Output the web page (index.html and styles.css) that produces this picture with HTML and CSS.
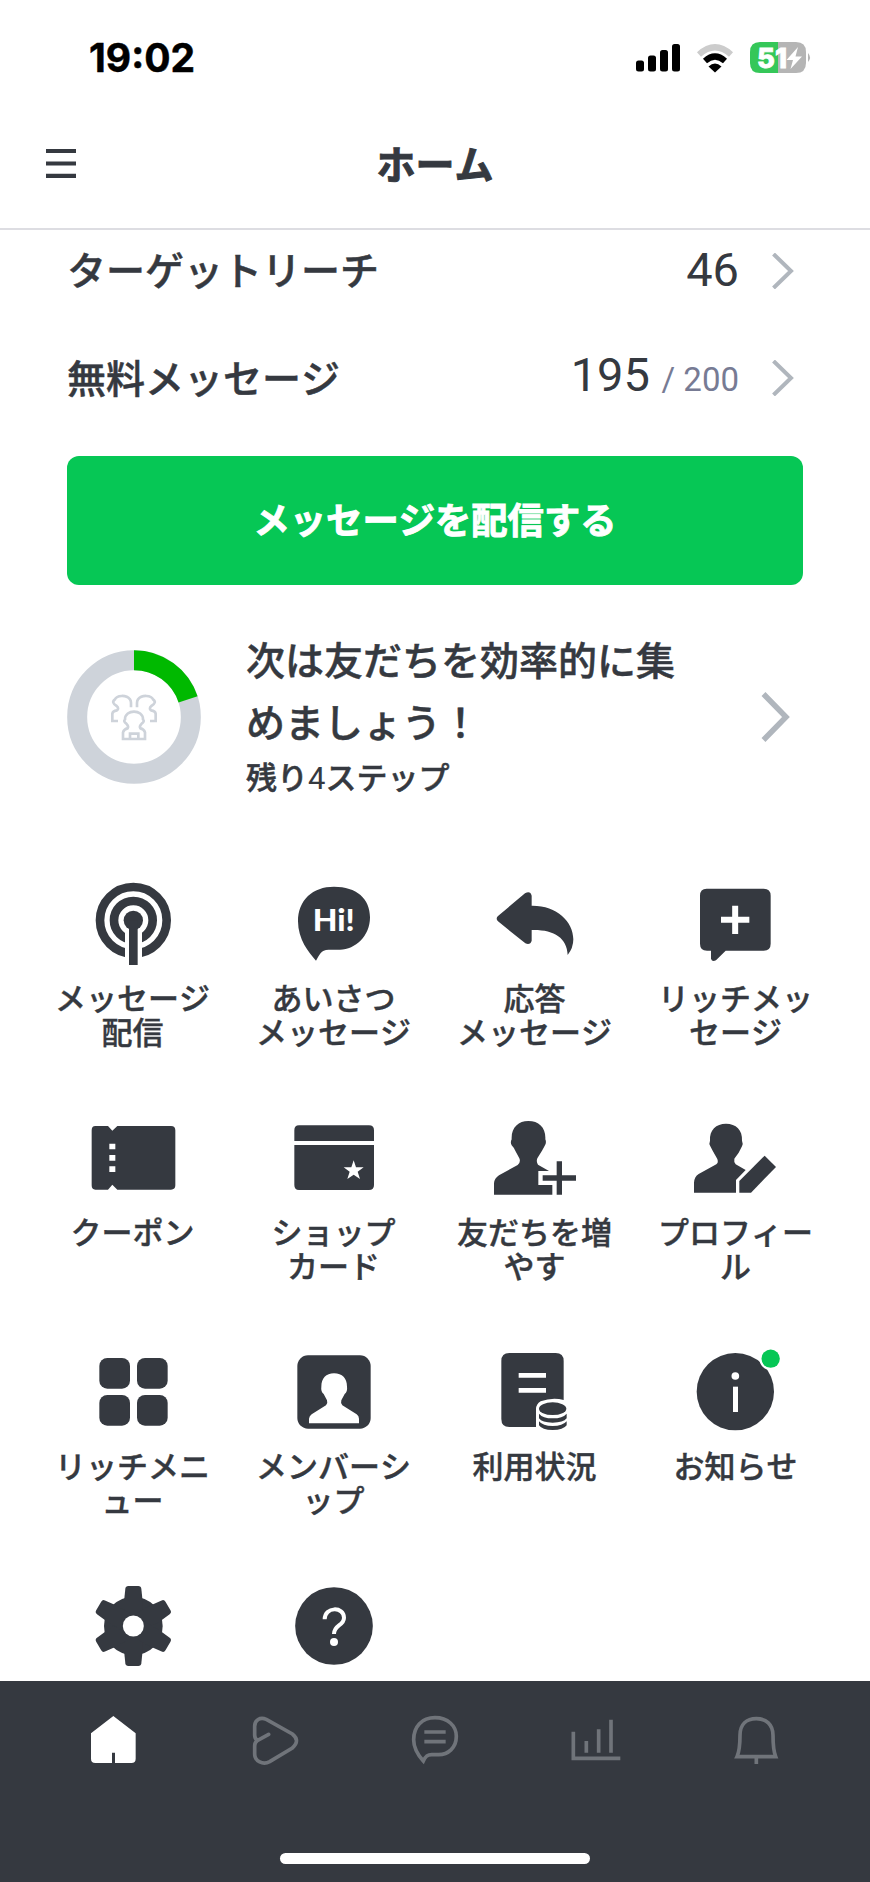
FILE: index.html
```html
<!DOCTYPE html>
<html lang="ja">
<head>
<meta charset="utf-8">
<title>ホーム</title>
<link rel="stylesheet" href="styles.css">
</head>
<body>
<div class="app">
  <div class="status">
    <span class="time">19:02</span>
    <svg class="status-icons" viewBox="630 36 190 44">
      <g fill="#000"><rect x="636" y="60.5" width="8" height="11" rx="2.5"/><rect x="648" y="55.5" width="8" height="16" rx="2.5"/><rect x="660" y="50" width="8" height="21.5" rx="2.5"/><rect x="672" y="44" width="8" height="27.500" rx="2.500"/></g>
      <path d="M699 54.500Q715 40 731 54.500" fill="none" stroke="#ccc" stroke-width="6"/>
      <path d="M705 61Q715 52 725 61" fill="none" stroke="#000" stroke-width="6"/>
      <path d="M708.500 66.500Q715 60.500 721.500 66.500L715 72.500Z" fill="#000"/>
      <path d="M778 42H760Q750 42 750 52V63Q750 73 760 73H778Z" fill="#35c759"/>
      <path d="M778 42H796Q806 42 806 52V63Q806 73 796 73H778Z" fill="#b5b5b5"/>
      <path d="M808 53Q812 57.500 808 62Z" fill="#b5b5b5"/>
      <text x="757" y="67.700" class="battery-text" textLength="30" lengthAdjust="spacingAndGlyphs">51</text>
      <path d="M798 47L786.500 60H793L790.500 69L802 56.500H795.500Z" fill="#fff"/>
    </svg>
  </div>
  <header class="header">
    <svg class="menu" viewBox="0 0 32 32"><path d="M0 3H30M0 15.500H30M0 27.800H30" stroke="#353940" stroke-width="4.200"/></svg>
    <h1>ホーム</h1>
  </header>
  <main class="main">
    <div class="row"><span class="row-label">ターゲットリーチ</span><span class="num">46</span><svg class="chev" viewBox="0 0 24 36"><path d="M2.500 1L20 18L2.500 35" /></svg></div>
    <div class="row"><span class="row-label">無料メッセージ</span><span class="num">195 <small>/ 200</small></span><svg class="chev" viewBox="0 0 24 36"><path d="M2.500 1L20 18L2.500 35" /></svg></div>
    <button class="send">メッセージを配信する</button>
    <section class="step">
      <svg class="ring" viewBox="21 27 402 402">
        <circle cx="222" cy="228" r="170.500" class="ring-track"/>
        <path d="M222 57.500A170.500 170.500 0 0 1 384.200 175.300" class="ring-value"/>
        <g class="people">
          <path id="friend" d="M174 240H157V218Q158 210 171 208Q178 202 170 195Q152 184 165 175C170 163 198 160 210 175Q213 179 213 186V199"/>
          <use href="#friend" transform="matrix(-1 0 0 1 444 0)"/>
          <path class="people-front" d="M189 294V274Q192 264 203 262Q207 256 199 248Q189 241 195 235C195 204 249 204 249 235Q255 241 245 248Q237 256 241 262Q252 264 255 274V294Z"/>
          <path d="M210 292V278H235V292"/>
        </g>
      </svg>
      <div class="step-text"><h2>次は友だちを効率的に集めましょう！</h2><p>残り<span class="four">4</span>ステップ</p></div>
      <svg class="chev-big" viewBox="0 0 32 50"><path d="M3.500 2L26 25L3.500 48"/></svg>
    </section>
    <nav class="grid">
      <a class="cell">
        <svg viewBox="129 30 300 300"><g fill="none" stroke="#353940"><circle cx="280" cy="181" r="100" stroke-width="26"/><circle cx="280" cy="181" r="58" stroke-width="26"/></g><path d="M255 200H306V320H255Z" fill="#fff"/><circle cx="280" cy="181" r="29"/><path d="M267 181H293V315H267Z"/></svg>
        <span>メッセージ<br>配信</span>
      </a>
      <a class="cell">
        <svg viewBox="732 30 300 300"><path d="M882 80C950 80 990 116 990 172C990 228 946 269 900 269H866C842 269 838 286 828 302C806 278 774 238 774 184C774 120 818 80 882 80Z"/><text x="818" y="214" class="hi" textLength="126" lengthAdjust="spacingAndGlyphs">Hi!</text></svg>
        <span>あいさつ<br>メッセージ</span>
      </a>
      <a class="cell">
        <svg viewBox="135 30 300 300"><path d="M174 168L255 100Q271 91 275 107V137C350 136 400 185 400 238Q400 264 383 285C381 232 340 208 275 210V242Q271 256 256 250L174 184Q166 176 174 168Z"/></svg>
        <span>応答<br>メッセージ</span>
      </a>
      <a class="cell">
        <svg viewBox="738 30 300 300"><path d="M800 86H971Q992 86 992 107V251Q992 272 971 272H857L828 301Q816 307 813 296V272H801Q780 272 780 251V107Q780 86 800 86Z"/><path d="M843 179.500H928M885.500 137V222" stroke="#fff" stroke-width="18"/></svg>
        <span>リッチメッ<br>セージ</span>
      </a>
      <a class="cell">
        <svg viewBox="129 12 300 300"><path d="M166 78H204L217 92L232 78H393Q406 78 406 91V256Q406 269 393 269H232L217 254L204 269H166Q155 269 155 256V91Q155 78 166 78Z"/><path d="M208 131H226V148H208ZM208 165H226V182H208ZM208 199H226V216H208Z" fill="#fff"/></svg>
        <span>クーポン</span>
      </a>
      <a class="cell">
        <svg viewBox="732 12 300 300"><path d="M777 76H987Q1002 76 1002 91V123H763V91Q763 76 777 76ZM763 135H1002V255Q1002 270 987 270H777Q763 270 763 255Z"/><path d="M941 181L948 202H971L953 215L960 237L941 224L922 237L929 215L911 202H934Z" fill="#fff"/></svg>
        <span>ショップ<br>カード</span>
      </a>
      <a class="cell">
        <svg viewBox="135 12 300 300"><path d="M162 284V250Q163 235 177 226L233 195Q243 187 238 175L225 151Q221 142 215 136Q210 127 215 118C213 83 235 63 265 63C297 63 318 83 316 118Q320 127 315 136L306 152L292 175Q288 186 294 194L327 213H295V255H337V284Z"/><path d="M308 234H408M358 184V284" stroke="#353940" stroke-width="16"/></svg>
        <span>友だちを増<br>やす</span>
      </a>
      <a class="cell">
        <svg viewBox="738 12 300 300"><path d="M762 278V248Q763 230 776 222L829 193Q836 188 832 177L818 152L811 139Q806 131 810 122C808 90 828 71 858 71C888 71 908 90 906 122Q910 131 906 139L896 158L883 176Q881 187 887 193L917 210L888 240V278Z"/><path d="M974 167L1008 201L933 278H898V243Z"/></svg>
        <span>プロフィー<br>ル</span>
      </a>
      <a class="cell">
        <svg viewBox="129 24 300 300"><rect x="178" y="84" width="92" height="92" rx="24"/><rect x="291" y="84" width="92" height="92" rx="24"/><rect x="178" y="195" width="92" height="92" rx="24"/><rect x="291" y="195" width="92" height="92" rx="24"/></svg>
        <span>リッチメニ<br>ュー</span>
      </a>
      <a class="cell">
        <svg viewBox="732 24 300 300"><rect x="772" y="76" width="220" height="220" rx="32"/><path d="M807 280V266Q808 258 815 253L858 226Q864 220 861 211L851 192Q842 184 844 170C844 145 858 130 882 130C907 130 921 145 921 170Q923 184 914 192L904 211Q901 220 907 226L950 253Q957 258 957 266V280Z" fill="#fff"/></svg>
        <span>メンバーシ<br>ップ</span>
      </a>
      <a class="cell">
        <svg viewBox="135 24 300 300"><path d="M208 69H347Q371 69 371 93V210Q337 201 302 214Q287 223 288 240V291H208Q184 291 184 267V93Q184 69 208 69Z"/><path d="M236 136H318M236 181H318" stroke="#fff" stroke-width="14"/><ellipse cx="338" cy="236" rx="41" ry="19"/><path d="M297 251Q308 265 338 265T380 251V265Q370 278 338 278T297 265ZM297 274Q308 288 338 288T380 274V286Q370 300 338 300T297 286Z"/></svg>
        <span>利用状況</span>
      </a>
      <a class="cell">
        <svg viewBox="738 24 300 300"><circle cx="886" cy="185" r="116"/><circle cx="992" cy="86" r="34" fill="#fff"/><circle cx="992" cy="86" r="27.500" fill="#06c755"/><circle cx="886" cy="138" r="11.500" fill="#fff"/><path d="M886.500 170V246" stroke="#fff" stroke-width="15"/></svg>
        <span>お知らせ</span>
      </a>
      <a class="cell">
        <svg viewBox="129 36 300 300"><circle cx="280" cy="198" r="88"/><path id="tooth" d="M252 125L256 86Q257 78 265 78H295Q303 78 304 86L308 125V271L304 310Q303 318 295 318H265Q257 318 256 310L252 271Z"/><use href="#tooth" transform="rotate(60 280 198)"/><use href="#tooth" transform="rotate(120 280 198)"/><circle cx="280" cy="198" r="31.500" fill="#fff"/></svg>
      </a>
      <a class="cell">
        <svg viewBox="732 36 300 300"><circle cx="882" cy="198" r="116.500"/><path d="M854 178C854 139 912 139 912 173C912 198 882 193 882 222" fill="none" stroke="#fff" stroke-width="12"/><circle cx="882" cy="246" r="12" fill="#fff"/></svg>
      </a>
    </nav>
  </main>
  <footer class="tabs">
    <div class="tab-row">
      <svg viewBox="130 450 180 180"><path d="M221 468L288 520V596Q288 609 275 609H226V578H217V609H167Q154 609 154 596V520Z" fill="#fff"/></svg>
      <svg viewBox="613 450 180 180"><path d="M687 523L653 542Q645 536 645 525V499C645 480 661 470 680 478L758 522Q783 542 758 564L690 605C670 616 645 604 645 582V558Q645 547 653 542" stroke-linecap="round"/></svg>
      <svg viewBox="15 90 180 180"><path d="M105 113C143 113 169 137 169 169C169 204 144 224 116 224H95C80 224 75 232 70 243C54 225 41 205 41 179C41 139 66 113 105 113ZM73 156H137M73 185H137"/></svg>
      <svg viewBox="497 90 180 180"><path d="M519 155V235H660M558 183V218M595 148V218M632 119V218"/></svg>
      <svg viewBox="980 90 180 180"><path d="M1019 166C1019 133 1039 116 1068 116C1097 116 1118 133 1118 166C1118 203 1120 215 1126 230H1010C1017 215 1019 200 1019 166ZM1068 232V252"/></svg>
    </div>
    <div class="home-bar"></div>
  </footer>
</div>
</body>
</html>
```
FILE: styles.css
```css
* { box-sizing: border-box; }
body { margin: 0; background: #fff; color: #353940; font-family: "Noto Sans CJK JP", sans-serif; font-weight: 500; font-kerning: none; }
h1, h2, p { margin: 0; }
svg { display: block; flex: none; }
.app { width: 870px; height: 1882px; display: flex; flex-direction: column; overflow: hidden; }
.status { height: 116px; display: flex; justify-content: space-between; align-items: flex-start; padding: 36px 50px 0 89px; flex: none; }
.time { font: 700 39px/44px Inter, sans-serif; color: #000; -webkit-text-stroke: 0.5px #000; }
.status-icons { width: 190px; height: 44px; }
.battery-text { font: 800 27px Inter, sans-serif; fill: #fff; stroke: #fff; stroke-width: 0.8px; }
.header { height: 114px; flex: none; border-bottom: 2px solid #dddde2; display: grid; grid-template-columns: 32px 1fr 32px; padding: 0 46px; }
.menu { width: 32px; height: 32px; margin-top: 32px; }
h1 { font-size: 39px; font-weight: 700; line-height: 92px; text-align: center; -webkit-text-stroke: 1px; }
.main { flex: 1; min-height: 0; overflow: hidden; padding: 0 67px; }
.row { height: 134px; display: flex; align-items: center; }
.row:first-child { height: 81px; }
.row-label { font-size: 39px; line-height: 58px; flex: 1; padding-bottom: 5px; -webkit-text-stroke: 0.5px; }
.num { font: 400 47px/54px Roboto, sans-serif; padding-bottom: 1px; margin-right: 1px; }
.num small { font-size: 33px; color: #777b94; }
.chev { width: 24px; height: 36px; margin: 0 8px 0 31px; fill: none; stroke: #b0b6bd; stroke-width: 4; }
.send { display: block; width: 736px; height: 129px; margin: 11px 0 0; padding: 0 0 5px; border: 0; border-radius: 12px; background: #06c755; color: #fff; font: 700 36.3px/54px "Noto Sans CJK JP", sans-serif; font-kerning: none; -webkit-text-stroke: 0.9px; }
.step { height: 285px; display: flex; align-items: center; padding-bottom: 22px; }
.ring { width: 134px; height: 134px; }
.ring-track, .ring-value { fill: none; stroke: #ced3da; stroke-width: 60; }
.ring-value { stroke: #00b900; }
.people { fill: none; stroke: #ced3da; stroke-width: 8; }
.people-front { fill: #fff; }
.step-text { width: 450px; margin-left: 45px; padding-bottom: 5px; -webkit-text-stroke: 0.5px; }
h2 { font-size: 39px; font-weight: 500; line-height: 62px; }
.step-text p { font-size: 31px; line-height: 46px; margin-top: 2px; }
.four { font-family: Roboto, sans-serif; font-weight: 400; -webkit-text-stroke: 0; }
.chev-big { width: 32px; height: 50px; margin-left: 64px; fill: none; stroke: #b0b6bd; stroke-width: 5.5; }
.grid { display: grid; grid-template-columns: repeat(4, 201px); grid-auto-rows: 234px; margin: 0 -33px 0 -35px; }
.cell { display: flex; flex-direction: column; align-items: center; fill: #353940; text-align: center; }
.cell svg { width: 100px; height: 100px; }
.cell span { margin-top: 10px; font-size: 31px; line-height: 34px; white-space: nowrap; -webkit-text-stroke: 0.4px; }
.hi { font: 900 92px Lato, sans-serif; fill: #fff; }
.tabs { height: 201px; flex: none; background: #353940; padding: 29px 33px 0; }
.tab-row { display: grid; grid-template-columns: repeat(5, 1fr); justify-items: center; }
.tab-row svg { width: 60px; height: 60px; fill: none; stroke: #70747a; stroke-width: 11; }
.tab-row svg:first-child { stroke: none; }
.home-bar { width: 310px; height: 11px; margin: 83px auto 0; border-radius: 6px; background: #fff; }
```
